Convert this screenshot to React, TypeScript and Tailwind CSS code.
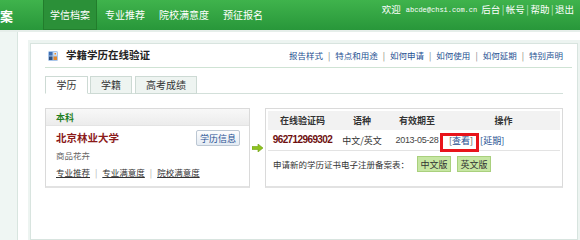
import React from 'react'

const navItems = ['学信档案', '专业推荐', '院校满意度', '预征报名']
const topLinks = ['报告样式', '特点和用途', '如何申请', '如何使用', '如何延期', '特别声明']

function Header() {
  return (
    <header className="h-[30px] flex bg-gradient-to-b from-[#3fb34c] to-[#28973a] text-white">
      <div className="w-[43px] flex items-center text-[13px] font-bold leading-none">案</div>
      <nav className="flex items-stretch text-[10px] leading-none gap-[2px]">
        {navItems.map((item, i) => (
          <a
            key={item}
            className={
              i === 0
                ? 'px-[6px] flex items-center bg-[#2b9038] border-x border-[#227d2c] border-b border-b-[#237f2e]'
                : 'px-[6px] flex items-center'
            }
          >
            {item}
          </a>
        ))}
      </nav>
      <div className="ml-auto h-[20px] flex items-center pr-[6px] text-[9.5px] leading-none">
        <span>欢迎</span>
        <span className="ml-[5px] mr-[4px] font-['Liberation_Mono',monospace] text-[7px]">abcde@chsi.com.cn</span>
        <span>后台</span>
        <span className="mx-[1.5px] text-[#bfe6c3]">|</span>
        <span>帐号</span>
        <span className="mx-[1.5px] text-[#bfe6c3]">|</span>
        <span>帮助</span>
        <span className="mx-[1.5px] text-[#bfe6c3]">|</span>
        <span>退出</span>
      </div>
    </header>
  )
}

function TitleIcon() {
  return (
    <svg width="10" height="10" viewBox="0 0 10 10">
      <rect x="0" y="0" width="10" height="10" rx="1.5" fill="#a9c6ea" />
      <rect x="1" y="1" width="3.5" height="3.5" fill="#3f6fb3" />
      <rect x="5.5" y="1" width="3.5" height="3.5" fill="#dbe7f6" />
      <rect x="1" y="5.5" width="3.5" height="3.5" fill="#2f4f7c" />
      <rect x="5.5" y="5.5" width="3.5" height="3.5" fill="#e3862a" />
      <rect x="6.5" y="2" width="1.5" height="1.5" fill="#e3862a" />
    </svg>
  )
}

function Arrow() {
  return (
    <svg width="11" height="8" viewBox="0 0 11 8">
      <path d="M0 2.5 H6 V0 L11 4 L6 8 V5.5 H0 Z" fill="#8dc21f" stroke="#6f9f12" strokeWidth="0.6" />
    </svg>
  )
}

export default function App() {
  return (
    <div className="w-[580px] h-[240px] overflow-hidden bg-white font-['Noto_Sans_CJK_SC','Liberation_Sans',sans-serif] text-[#333]">
      <Header />
      <div className="h-[2px] bg-[#e6eeea]" />
      <div className="flex h-[208px]">
        <aside className="w-[18px] shrink-0 bg-[#eff6f3] border-r border-[#d8e5df]" />
        <div className="ml-[10px] mt-[8px] flex-1 bg-[#edf4f1] pl-[2px] pr-[2px] pt-[3px]">
          <div className="h-full bg-white border border-[#d8e4df] pl-[14px] pr-[14px]">
            {/* title row */}
            <div className="h-[24px] flex items-center border-b border-[#cfe3d4] -mr-[9px] pr-[9px]">
              <div className="ml-[3px]">
                <TitleIcon />
              </div>
              <span className="ml-[8px] text-[10.5px] font-bold text-[#222] leading-none">学籍学历在线验证</span>
              <div className="ml-auto flex items-center text-[8.5px] leading-none text-[#1d4f91]">
                {topLinks.map((l, i) => (
                  <React.Fragment key={l}>
                    {i > 0 && <span className="mx-[5px] text-[#777]">|</span>}
                    <a>{l}</a>
                  </React.Fragment>
                ))}
              </div>
            </div>

            {/* tabs */}
            <div className="mt-[8px] h-[18px] flex border-b border-[#d3e0da] text-[10px] leading-none">
              <div className="w-[43px] h-[18px] -mb-px flex items-center justify-center bg-white border border-[#cddad4] border-b-white">学历</div>
              <div className="ml-[2px] w-[42px] h-[18px] -mb-px flex items-center justify-center bg-[#eef4f1] border border-[#cddad4]">学籍</div>
              <div className="ml-[3px] w-[62px] h-[18px] -mb-px flex items-center justify-center bg-[#eef4f1] border border-[#cddad4]">高考成绩</div>
            </div>

            {/* cards */}
            <div className="mt-[14px] flex items-center">
              <div className="w-[205px] h-[80px] border border-[#dadada] border-b-2 border-b-[#e2e2e2] flex flex-col">
                <div className="h-[17px] flex items-center pl-[10px] bg-gradient-to-b from-[#f8f8f8] to-[#ececec] border-b border-[#e4e4e4] text-[9px] font-bold text-[#1f7f1f] leading-none">本科</div>
                <div className="pl-[10px] pr-[9px]">
                  <div className="mt-[4px] h-[16px] flex items-center justify-between">
                    <span className="text-[10.5px] font-bold text-[#8b1a1a] leading-none">北京林业大学</span>
                    <button className="w-[44px] h-[16px] flex items-center justify-center bg-gradient-to-b from-[#fdfdfd] to-[#e4ebf3] border border-[#bcc7d3] rounded-[2px] text-[9px] text-[#1d4f91] leading-none">学历信息</button>
                  </div>
                  <div className="mt-[2px] h-[15px] flex items-center text-[8.5px] text-[#666] leading-none">商品花卉</div>
                  <div className="mt-[2px] h-[15px] flex items-center text-[8.5px] leading-none">
                    <a className="underline">专业推荐</a>
                    <span className="mx-[5px] text-[#aaa]">|</span>
                    <a className="underline">专业满意度</a>
                    <span className="mx-[5px] text-[#aaa]">|</span>
                    <a className="underline">院校满意度</a>
                  </div>
                </div>
              </div>

              <div className="w-[15px] flex justify-center">
                <Arrow />
              </div>

              <div className="w-[298px] h-[80px] border border-[#dadada] border-b-2 border-b-[#e2e2e2] p-[2px]">
                <div className="h-[19px] grid grid-cols-[69px_50px_60px_1fr] items-center bg-[#f2f2f2] text-[9px] font-bold text-[#333] leading-none text-center">
                  <span>在线验证码</span>
                  <span>语种</span>
                  <span>有效期至</span>
                  <span>操作</span>
                </div>
                <div className="h-[21px] grid grid-cols-[69px_50px_60px_1fr] items-center border-b border-[#e3e3e3] text-[9px] leading-none">
                  <span className="text-center font-['Liberation_Sans',sans-serif] font-bold text-[10px] tracking-[-0.6px] text-[#6e0f0f]">962712969302</span>
                  <span className="text-center">中文/英文</span>
                  <span className="text-center font-['Liberation_Sans',sans-serif] text-[9px] tracking-[-0.3px] text-[#444]">2013-05-28</span>
                  <div className="h-full flex items-center pl-[2px]">
                    <span className="relative">
                      <span className="text-[#555]">[</span>
                      <a className="text-[#1d4f91]">查看</a>
                      <span className="text-[#555]">]</span>
                      <span className="absolute -left-[9px] -right-[6px] -top-[3px] -bottom-[7px] border-[3px] border-[#e8141b]" />
                    </span>
                    <span className="ml-[7px] text-[#1d4f91]">[延期]</span>
                  </div>
                </div>
                <div className="mt-[5px] pl-[5px] h-[16px] flex items-center text-[8.5px] leading-none">
                  <span>申请新的学历证书电子注册备案表：</span>
                  <button className="ml-[8px] w-[34px] h-[16px] flex items-center justify-center bg-[#c6e6a2] border border-[#a9d07d] text-[9px] text-[#333] leading-none">中文版</button>
                  <button className="ml-[6px] w-[34px] h-[16px] flex items-center justify-center bg-[#c6e6a2] border border-[#a9d07d] text-[9px] text-[#333] leading-none">英文版</button>
                </div>
              </div>
            </div>
          </div>
        </div>
      </div>
    </div>
  )
}
